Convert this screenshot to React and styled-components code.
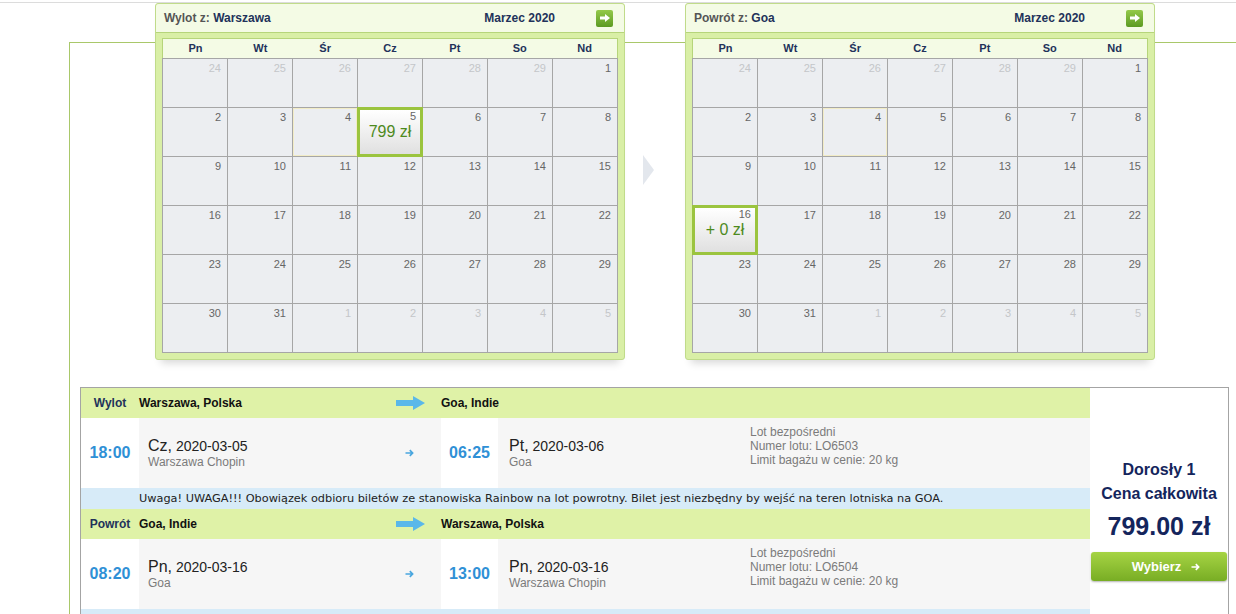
import React from 'react';
import styled, { createGlobalStyle } from 'styled-components';

// Globals //
const GlobalStyle = createGlobalStyle`
  body {
    margin: 0;
    background: #fff;
    font-family: "Liberation Sans", Arial, sans-serif;
  }
`;

const navy = '#22325a';
const limeLine = '#b6d57a';
const cellLine = '#a6a6a6';

// Page frame //
const TopRule = styled.div`
  height: 2px;
  border-bottom: 1px solid #dcdcdc;
`;

const Frame = styled.div`
  margin: 39px 0 0 69px;
  border-top: 1px solid #a9c86a;
  border-left: 1px solid #a9c86a;
  min-height: 580px;
`;

const CalendarRow = styled.div`
  display: flex;
  margin-top: -40px;
  padding-left: 85px;
`;

const Between = styled.div`
  width: 60px;
  padding: 152px 0 0 18px;
  box-sizing: border-box;
`;

const Triangle = styled.div`
  width: 0;
  height: 0;
  border-left: 11px solid #e3e7ed;
  border-top: 15px solid transparent;
  border-bottom: 15px solid transparent;
`;

// Calendar //
const CalendarBox = styled.div`
  width: 470px;
  box-sizing: border-box;
  background: #d9efa6;
  border: 1px solid #c0db8a;
  border-radius: 3px;
  padding: 0 6px 6px;
  box-shadow: 0 9px 8px -6px rgba(0, 0, 0, 0.16);
  position: relative;
  z-index: 1;
`;

const CalHeader = styled.div`
  display: flex;
  align-items: center;
  height: 28px;
  margin: 0 -6px;
  padding: 0 11px 0 8px;
  background: #f4fbe5;
  border-bottom: 1px solid ${limeLine};
  border-radius: 3px 3px 0 0;
  font-size: 12px;
  font-weight: bold;
`;

const CalLabel = styled.span`
  color: #555;
  b {
    color: ${navy};
  }
`;

const Month = styled.span`
  margin-left: auto;
  margin-right: 41px;
  color: ${navy};
`;

const NextButton = styled.span`
  display: flex;
  align-items: center;
  justify-content: center;
  width: 17px;
  height: 17px;
  border-radius: 2px;
  background: linear-gradient(#94c94a, #5c9a22);
`;

const WeekHeader = styled.div`
  display: grid;
  grid-template-columns: repeat(7, 1fr);
  height: 19px;
  margin-top: 5px;
  background: #f4fbe5;
  border: 1px solid ${limeLine};
  border-bottom: none;
  font-size: 11px;
  font-weight: bold;
  color: ${navy};
  line-height: 19px;
  text-align: center;
`;

const DayGrid = styled.div`
  display: grid;
  grid-template-columns: repeat(7, 65px);
  grid-auto-rows: 49px;
  border-top: 1px solid ${cellLine};
  border-left: 1px solid ${cellLine};
`;

const Cell = styled.div`
  box-sizing: border-box;
  background: #eceef1;
  border-right: 1px solid ${cellLine};
  border-bottom: 1px solid ${cellLine};
  ${({ $today }) => $today && 'box-shadow: inset 1px 1px 0 #f2ecc6, inset -1px -1px 0 #f2ecc6;'}
`;

const PickedCell = styled.div`
  box-sizing: border-box;
  margin: -1px 0 0 -1px;
  border: 3px solid #9bc43f;
  background: linear-gradient(#ffffff, #e0e0e0);
  position: relative;
  z-index: 1;
`;

const DayNum = styled.div`
  text-align: right;
  font-size: 11px;
  line-height: 13px;
  padding: ${({ $picked }) => ($picked ? '0 4px 0 0' : '3px 6px 0 0')};
  color: ${({ $muted }) => ($muted ? '#c4c6c9' : '#666')};
`;

const CellPrice = styled.div`
  text-align: center;
  font-size: 16px;
  line-height: 18px;
  color: #4d8a1d;
`;

const WEEKDAYS = ['Pn', 'Wt', 'Śr', 'Cz', 'Pt', 'So', 'Nd'];

// March 2020 on a Monday-first grid, with the tail of Feb and the head of April
const MARCH_DAYS = [
  ...[24, 25, 26, 27, 28, 29].map((d) => ({ d, muted: true })),
  ...Array.from({ length: 31 }, (_, i) => ({ d: i + 1, muted: false })),
  ...[1, 2, 3, 4, 5].map((d) => ({ d, muted: true })),
];

const ArrowIcon = ({ size = 11, color = '#fff' }) => (
  <svg width={size} height={size * 0.8} viewBox="0 0 10 8">
    <path d="M0 2.6 H5 V0 L10 4 L5 8 V5.4 H0 Z" fill={color} />
  </svg>
);

const Calendar = ({ label, city, picked, price }) => (
  <CalendarBox>
    <CalHeader>
      <CalLabel>
        {label} <b>{city}</b>
      </CalLabel>
      <Month>Marzec 2020</Month>
      <NextButton>
        <ArrowIcon size={10} />
      </NextButton>
    </CalHeader>
    <WeekHeader>
      {WEEKDAYS.map((w) => (
        <span key={w}>{w}</span>
      ))}
    </WeekHeader>
    <DayGrid>
      {MARCH_DAYS.map(({ d, muted }, i) =>
        !muted && d === picked ? (
          <PickedCell key={i}>
            <DayNum $picked>{d}</DayNum>
            <CellPrice>{price}</CellPrice>
          </PickedCell>
        ) : (
          <Cell key={i} $today={!muted && d === 4}>
            <DayNum $muted={muted}>{d}</DayNum>
          </Cell>
        )
      )}
    </DayGrid>
  </CalendarBox>
);

// Offer panel //
const Offer = styled.div`
  display: flex;
  width: 1149px;
  box-sizing: border-box;
  margin: 27px 0 0 10px;
  border: 1px solid #a4a4a4;
  border-bottom: none;
`;

const Legs = styled.div`
  flex: 1;
`;

const LegHead = styled.div`
  display: grid;
  grid-template-columns: 58px 302px 1fr;
  align-items: center;
  height: 30px;
  background: #dff2a7;
  font-size: 12px;
  font-weight: bold;
  color: #111;
`;

const LegKind = styled.span`
  text-align: center;
  color: ${navy};
`;

const FromCity = styled.span`
  display: flex;
  align-items: center;
  justify-content: space-between;
  padding-right: 16px;
`;

const LegBody = styled.div`
  display: grid;
  grid-template-columns: 58px 302px 57px 247px 1fr;
  height: 70px;
`;

const Time = styled.div`
  display: flex;
  align-items: center;
  justify-content: center;
  font-size: 16px;
  font-weight: bold;
  color: #2f90d6;
`;

const Stop = styled.div`
  display: flex;
  align-items: center;
  background: #f6f6f6;
  padding: 0 ${({ $pad }) => $pad || 0}px 0 ${({ $left }) => $left}px;
`;

const StopText = styled.div`
  flex: 1;
  padding-top: 1px;
`;

const DateLine = styled.div`
  font-size: 14px;
  line-height: 17px;
  color: #222;
  b {
    font-weight: normal;
    font-size: 16px;
  }
`;

const Airport = styled.div`
  font-size: 12px;
  line-height: 15px;
  color: #7b7b7b;
`;

const Info = styled.div`
  background: #f6f6f6;
  padding: 7px 0 0 5px;
  font-size: 12px;
  line-height: 14px;
  color: #7b7b7b;
`;

const Notice = styled.div`
  height: 21px;
  padding-left: 58px;
  background: #d7ebf8;
  font-family: "DejaVu Sans", Verdana, sans-serif;
  font-size: 11.3px;
  line-height: 21px;
  color: #222;
  white-space: nowrap;
  overflow: hidden;
`;

const PriceCol = styled.div`
  width: 138px;
  padding-top: 70px;
  text-align: center;
  color: #14255c;
  font-weight: bold;
`;

const PriceLabel = styled.div`
  font-size: 16px;
  line-height: 24px;
`;

const Total = styled.div`
  margin-top: 5px;
  font-size: 25px;
  line-height: 30px;
`;

const ChooseButton = styled.div`
  display: flex;
  align-items: center;
  justify-content: center;
  gap: 10px;
  height: 29px;
  margin: 11px 1px 0;
  padding-left: 14px;
  border-radius: 3px;
  background: linear-gradient(#a6d444, #78ad24);
  box-shadow: 0 1px 2px rgba(0, 0, 0, 0.3);
  color: #fff;
  font-size: 13px;
`;

const BigArrow = () => (
  <svg width="29" height="14" viewBox="0 0 29 14">
    <path d="M0 4 H17 V0 L29 7 L17 14 V10 H0 Z" fill="#5ab8e9" />
  </svg>
);

const SmallArrow = ({ color = '#4aa7df' }) => (
  <svg width="9" height="8" viewBox="0 0 9 8">
    <path d="M0.5 4 H7.5 M4.8 1.2 L7.6 4 L4.8 6.8" stroke={color} strokeWidth="1.7" fill="none" />
  </svg>
);

const NOTICE =
  'Uwaga! UWAGA!!! Obowiązek odbioru biletów ze stanowiska Rainbow na lot powrotny. Bilet jest niezbędny by wejść na teren lotniska na GOA.';

const legs = [
  {
    kind: 'Wylot',
    from: 'Warszawa, Polska',
    to: 'Goa, Indie',
    dep: '18:00',
    depDay: 'Cz',
    depDate: '2020-03-05',
    depPort: 'Warszawa Chopin',
    arr: '06:25',
    arrDay: 'Pt',
    arrDate: '2020-03-06',
    arrPort: 'Goa',
    flight: 'LO6503',
    notice: NOTICE,
  },
  {
    kind: 'Powrót',
    from: 'Goa, Indie',
    to: 'Warszawa, Polska',
    dep: '08:20',
    depDay: 'Pn',
    depDate: '2020-03-16',
    depPort: 'Goa',
    arr: '13:00',
    arrDay: 'Pn',
    arrDate: '2020-03-16',
    arrPort: 'Warszawa Chopin',
    flight: 'LO6504',
    notice: '',
  },
];

const Leg = ({ leg }) => (
  <>
    <LegHead>
      <LegKind>{leg.kind}</LegKind>
      <FromCity>
        {leg.from}
        <BigArrow />
      </FromCity>
      <span>{leg.to}</span>
    </LegHead>
    <LegBody>
      <Time>{leg.dep}</Time>
      <Stop $left={9} $pad={27}>
        <StopText>
          <DateLine>
            <b>{leg.depDay},</b> {leg.depDate}
          </DateLine>
          <Airport>{leg.depPort}</Airport>
        </StopText>
        <SmallArrow />
      </Stop>
      <Time>{leg.arr}</Time>
      <Stop $left={11}>
        <StopText>
          <DateLine>
            <b>{leg.arrDay},</b> {leg.arrDate}
          </DateLine>
          <Airport>{leg.arrPort}</Airport>
        </StopText>
      </Stop>
      <Info>
        Lot bezpośredni
        <br />
        Numer lotu: {leg.flight}
        <br />
        Limit bagażu w cenie: 20 kg
      </Info>
    </LegBody>
    <Notice>{leg.notice}</Notice>
  </>
);

export default function App() {
  return (
    <>
      <GlobalStyle />
      <TopRule />
      <Frame>
        <CalendarRow>
          <Calendar label="Wylot z:" city="Warszawa" picked={5} price="799 zł" />
          <Between>
            <Triangle />
          </Between>
          <Calendar label="Powrót z:" city="Goa" picked={16} price="+ 0 zł" />
        </CalendarRow>
        <Offer>
          <Legs>
            {legs.map((leg) => (
              <Leg key={leg.kind} leg={leg} />
            ))}
          </Legs>
          <PriceCol>
            <PriceLabel>Dorosły 1</PriceLabel>
            <PriceLabel>Cena całkowita</PriceLabel>
            <Total>799.00 zł</Total>
            <ChooseButton>
              Wybierz
              <SmallArrow color="#fff" />
            </ChooseButton>
          </PriceCol>
        </Offer>
      </Frame>
    </>
  );
}
